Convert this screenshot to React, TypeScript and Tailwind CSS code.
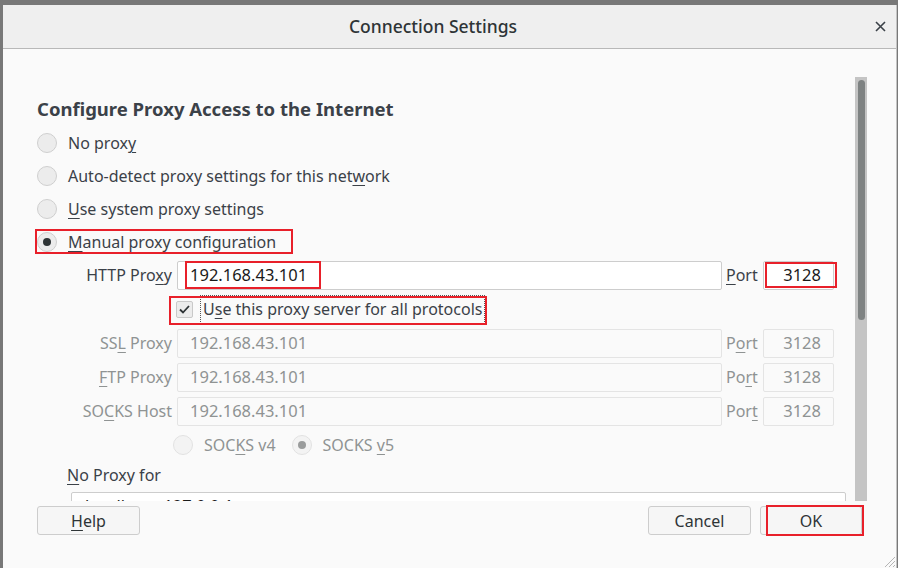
import React from 'react'

function Mn({ children }: { children: React.ReactNode }) {
  return <span className="underline decoration-1 underline-offset-[3px]">{children}</span>
}

// red annotation frame drawn over the screenshot
function Mark({ className }: { className: string }) {
  return <span className={`pointer-events-none absolute border-2 border-[#e8202a] ${className}`} />
}

function Radio({ checked, disabled }: { checked?: boolean; disabled?: boolean }) {
  return (
    <span
      className={`flex h-[20px] w-[20px] shrink-0 items-center justify-center rounded-full border ${
        disabled ? 'border-[#e2e2e2] bg-[#f3f3f3]' : 'border-[#cfcfcf] bg-[#ececec]'
      }`}
    >
      {checked && (
        <span className={`h-[8px] w-[8px] rounded-full ${disabled ? 'bg-[#9a9c9c]' : 'bg-[#2e3436]'}`} />
      )}
    </span>
  )
}

function ProxyRow({
  label,
  value,
  port,
  portLabel,
  active,
}: {
  label: React.ReactNode
  value: string
  port: string
  portLabel: React.ReactNode
  active?: boolean
}) {
  const labelColor = active ? 'text-[#3b4148]' : 'text-[#8f9393]'
  const box = active
    ? 'border-[#cdcdcd] bg-white text-[#1a1a1a]'
    : 'border-[#e4e4e4] bg-[#fafafa] text-[#8f9393]'
  return (
    <div className="flex h-[34px] items-center">
      <div className={`w-[135px] whitespace-nowrap text-right ${labelColor}`}>{label}</div>
      <div className={`relative ml-[5px] flex h-[29px] w-[545px] items-center rounded-[2px] border pl-[12px] text-[16.5px] ${box}`}>
        {value}
        {active && <Mark className="left-[7px] top-[-1px] h-[28px] w-[136px]" />}
      </div>
      <div className={`ml-[4px] w-[32px] ${labelColor}`}>{portLabel}</div>
      <div className={`relative ml-[5px] flex h-[29px] w-[71px] items-center justify-end rounded-[2px] border pr-[12px] text-[16.5px] ${box}`}>
        {port}
        {active && <Mark className="left-[1px] top-0 h-[26px] w-[72px]" />}
      </div>
    </div>
  )
}

export default function App() {
  const radios = [
    { label: <>No prox<Mn>y</Mn></> },
    { label: <>Auto-detect proxy settings for this net<Mn>w</Mn>ork</> },
    { label: <><Mn>U</Mn>se system proxy settings</> },
  ]

  return (
    <div className="h-[568px] w-[898px] overflow-hidden bg-[#787878] pl-[3px] pt-[5px] font-['Noto_Sans','Open_Sans',sans-serif] text-[16px] text-[#3b4148]">
      <div className="flex h-[563px] w-[894px] flex-col border-r border-[#c4c4c4] bg-[#fafafa]">
        {/* Title bar */}
        <div className="grid h-[44px] shrink-0 grid-cols-[1fr_33px] items-center border-b border-[#b8b8b8] bg-[#efefef]">
          <div className="text-center text-[17.5px] font-medium text-[#2e3436]">Connection Settings</div>
          <svg width="11" height="11" viewBox="0 0 11 11" className="ml-[12px]">
            <path d="M1 1 L10 10 M10 1 L1 10" stroke="#3b4148" strokeWidth="1.6" />
          </svg>
        </div>

        {/* Scrolling body */}
        <div className="flex h-[452px] shrink-0">
          <div className="w-[852px] overflow-hidden pl-[34px] pt-[48px]">
            <h2 className="h-[24px] whitespace-nowrap text-[18.5px] font-bold leading-[24px] text-[#3b4148]">
              Configure Proxy Access to the Internet
            </h2>
            <div className="mt-[5px]">
              {radios.map((r, i) => (
                <div key={i} className="flex h-[33px] items-center gap-[11px]">
                  <Radio />
                  <span>{r.label}</span>
                </div>
              ))}
              <div className="relative flex h-[33px] items-center gap-[11px]">
                <Radio checked />
                <span>
                  <Mn>M</Mn>anual proxy configuration
                </span>
                <Mark className="left-[-2px] top-[4px] h-[25px] w-[258px]" />
              </div>
            </div>

            <ProxyRow
              active
              label={<>HTTP Pro<Mn>x</Mn>y</>}
              value="192.168.43.101"
              portLabel={<><Mn>P</Mn>ort</>}
              port="3128"
            />

            <div className="flex h-[34px] items-center pl-[139px]">
              <div className="relative flex items-center">
                <span className="flex h-[17px] w-[17px] items-center justify-center rounded-[2px] border border-[#c9c9c9] bg-[#ececec]">
                  <svg width="11" height="9" viewBox="0 0 11 9">
                    <path d="M1 4.5 L4 7.5 L10 1" fill="none" stroke="#2e3436" strokeWidth="1.8" />
                  </svg>
                </span>
                <span className="ml-[7px] whitespace-nowrap border border-dotted border-[#555] px-[2px] leading-[27px]">
                  U<Mn>s</Mn>e this proxy server for all protocols
                </span>
                <Mark className="left-[-7px] top-[1px] h-[29px] w-[318px]" />
              </div>
            </div>

            <ProxyRow
              label={<>SS<Mn>L</Mn> Proxy</>}
              value="192.168.43.101"
              portLabel={<>P<Mn>o</Mn>rt</>}
              port="3128"
            />
            <ProxyRow
              label={<><Mn>F</Mn>TP Proxy</>}
              value="192.168.43.101"
              portLabel={<>Po<Mn>r</Mn>t</>}
              port="3128"
            />
            <ProxyRow
              label={<>SO<Mn>C</Mn>KS Host</>}
              value="192.168.43.101"
              portLabel={<>Por<Mn>t</Mn></>}
              port="3128"
            />

            <div className="flex h-[33px] items-center pl-[136px] text-[#8f9393]">
              <Radio disabled />
              <span className="ml-[11px]">
                SOC<Mn>K</Mn>S v4
              </span>
              <span className="ml-[16px]">
                <Radio checked disabled />
              </span>
              <span className="ml-[11px]">
                SOCKS <Mn>v</Mn>5
              </span>
            </div>

            <div className="flex h-[28px] items-center pl-[30px]">
              <span>
                <Mn>N</Mn>o Proxy for
              </span>
            </div>
            <div className="ml-[34px] mt-[3px] h-[40px] w-[775px] rounded-[2px] border border-[#cdcdcd] bg-white pl-[13px] pt-[6px] text-[16.5px] leading-[14px] text-[#1a1a1a]">
              localhost, 127.0.0.1
            </div>
          </div>

          {/* scrollbar */}
          <div className="mt-[28px] flex w-[12px] justify-center bg-[#c4c4c4] pt-[3px]">
            <div className="h-[240px] w-[7px] rounded-full bg-[#7e8282]" />
          </div>
        </div>

        {/* Buttons */}
        <div className="flex items-start px-[34px] pt-[5px]">
          <button className="flex h-[29px] w-[103px] items-center justify-center rounded-[3px] border border-[#cdcdcd] bg-[#f6f6f6] text-[#2e3436]">
            <span>
              <Mn>H</Mn>elp
            </span>
          </button>
          <div className="flex-1" />
          <button className="flex h-[29px] w-[103px] items-center justify-center rounded-[3px] border border-[#cdcdcd] bg-[#f6f6f6] text-[#2e3436]">
            Cancel
          </button>
          <div className="relative ml-[9px]">
            <button className="flex h-[29px] w-[102px] items-center justify-center rounded-[3px] border border-[#cdcdcd] bg-[#f6f6f6] text-[#2e3436]">
              OK
            </button>
            <Mark className="left-[6px] top-[-1px] h-[31px] w-[98px]" />
          </div>
        </div>

        <div className="flex flex-1 items-end justify-end">
          <svg width="14" height="14" viewBox="0 0 14 14">
            <path d="M13 3 L3 13 M13 7 L7 13 M13 11 L11 13" stroke="#b5b5b5" strokeWidth="1" />
          </svg>
        </div>
      </div>
    </div>
  )
}
